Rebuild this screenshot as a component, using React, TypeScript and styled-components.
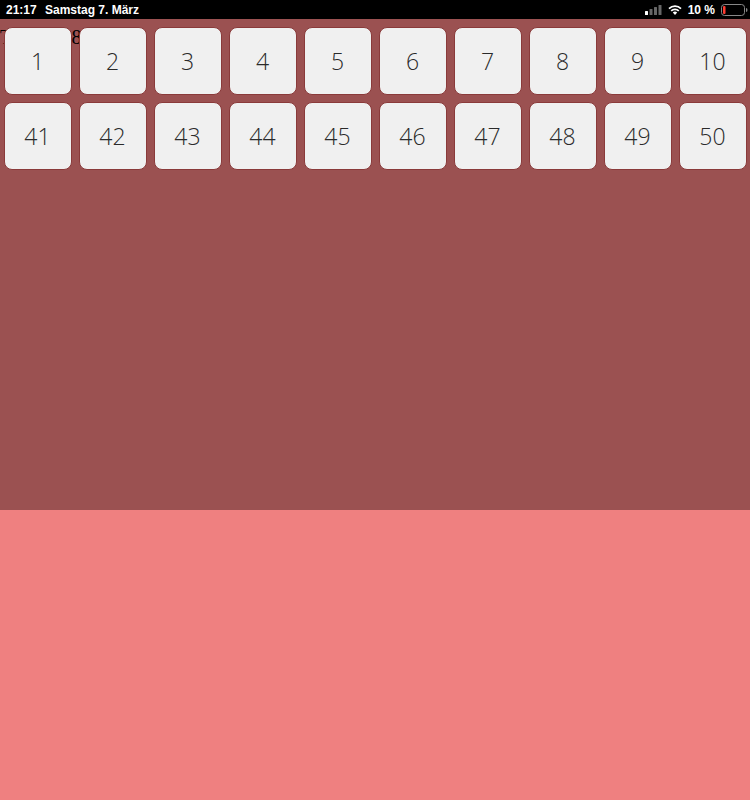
import React from 'react'
import styled, { createGlobalStyle } from 'styled-components'

const GlobalStyle = createGlobalStyle`
  html, body {
    margin: 0;
    padding: 0;
    background: #ef8080;
  }
  * {
    box-sizing: border-box;
  }
`

const NUMBERS = [1, 2, 3, 4, 5, 6, 7, 8, 9, 10, 41, 42, 43, 44, 45, 46, 47, 48, 49, 50]

const SignalIcon = () => (
  <svg width="17" height="10" viewBox="0 0 17 10">
    <rect x="0" y="6" width="3" height="4" rx="0.5" fill="#fff" />
    <rect x="4.5" y="4" width="3" height="6" rx="0.5" fill="#666" />
    <rect x="9" y="2" width="3" height="8" rx="0.5" fill="#666" />
    <rect x="13.5" y="0" width="3" height="10" rx="0.5" fill="#666" />
  </svg>
)

const WifiIcon = () => (
  <svg width="14" height="10" viewBox="0 0 14 10">
    <path d="M7 10 L4.8 7.6 A3.2 3.2 0 0 1 9.2 7.6 Z" fill="#fff" />
    <path d="M2.6 5.3 A6.3 6.3 0 0 1 11.4 5.3 L10.2 6.6 A4.5 4.5 0 0 0 3.8 6.6 Z" fill="#fff" />
    <path d="M0.4 3 A9.4 9.4 0 0 1 13.6 3 L12.4 4.3 A7.6 7.6 0 0 0 1.6 4.3 Z" fill="#fff" />
  </svg>
)

const BatteryIcon = () => (
  <svg width="27" height="12" viewBox="0 0 27 12">
    <rect x="0.5" y="0.5" width="23" height="11" rx="3" fill="none" stroke="#888" />
    <rect x="2" y="2" width="2.5" height="8" rx="1" fill="#ff3b30" />
    <path d="M25 4 Q26.5 4 26.5 6 Q26.5 8 25 8 Z" fill="#888" />
  </svg>
)

export default function App() {
  return (
    <Page>
      <GlobalStyle />
      <StatusBar>
        <Clock>21:17</Clock>
        <DateLabel>Samstag 7. März</DateLabel>
        <StatusRight>
          <SignalIcon />
          <WifiIcon />
          <Battery>10 %</Battery>
          <BatteryIcon />
        </StatusRight>
      </StatusBar>
      <Board>
        <Caption>Tabelle 8</Caption>
        <Grid>
          {NUMBERS.map((n) => (
            <Tile key={n}>{n}</Tile>
          ))}
        </Grid>
      </Board>
      <Footer />
    </Page>
  )
}

const Page = styled.div`
  display: flex;
  flex-direction: column;
  width: 750px;
  height: 800px;
  overflow: hidden;
`

const StatusBar = styled.div`
  display: flex;
  align-items: center;
  height: 19px;
  padding: 0 6px;
  background: #000;
  color: #fff;
  font-family: 'Liberation Sans', Arial, sans-serif;
  font-size: 12px;
  font-weight: bold;
`

const Clock = styled.span`
  width: 39px;
`

const DateLabel = styled.span``

const StatusRight = styled.div`
  display: flex;
  align-items: center;
  gap: 6px;
  margin-left: auto;
  margin-right: -4px;
`

const Battery = styled.span``

const Board = styled.div`
  position: relative;
  height: 491px;
  background: #9b5151;
`

/* label that sits underneath the tile grid */
const Caption = styled.div`
  padding: 6px 0 0 0;
  font-family: 'Liberation Serif', 'Times New Roman', serif;
  font-size: 20px;
  line-height: 24px;
  letter-spacing: 1px;
  color: #000;
`

const Grid = styled.div`
  position: absolute;
  top: 8px;
  left: 3.5px;
  display: grid;
  grid-template-columns: repeat(10, 68px);
  grid-auto-rows: 68px;
  gap: 7px;
`

const Tile = styled.div`
  display: flex;
  align-items: center;
  justify-content: center;
  background: #f0f0f0;
  border: 1px solid #8a3a3a;
  border-radius: 8px;
  font-family: 'Open Sans', sans-serif;
  font-weight: 300;
  font-size: 23px;
  color: #2a2a2a;
`

const Footer = styled.div`
  flex: 1;
  background: #ef8080;
`
